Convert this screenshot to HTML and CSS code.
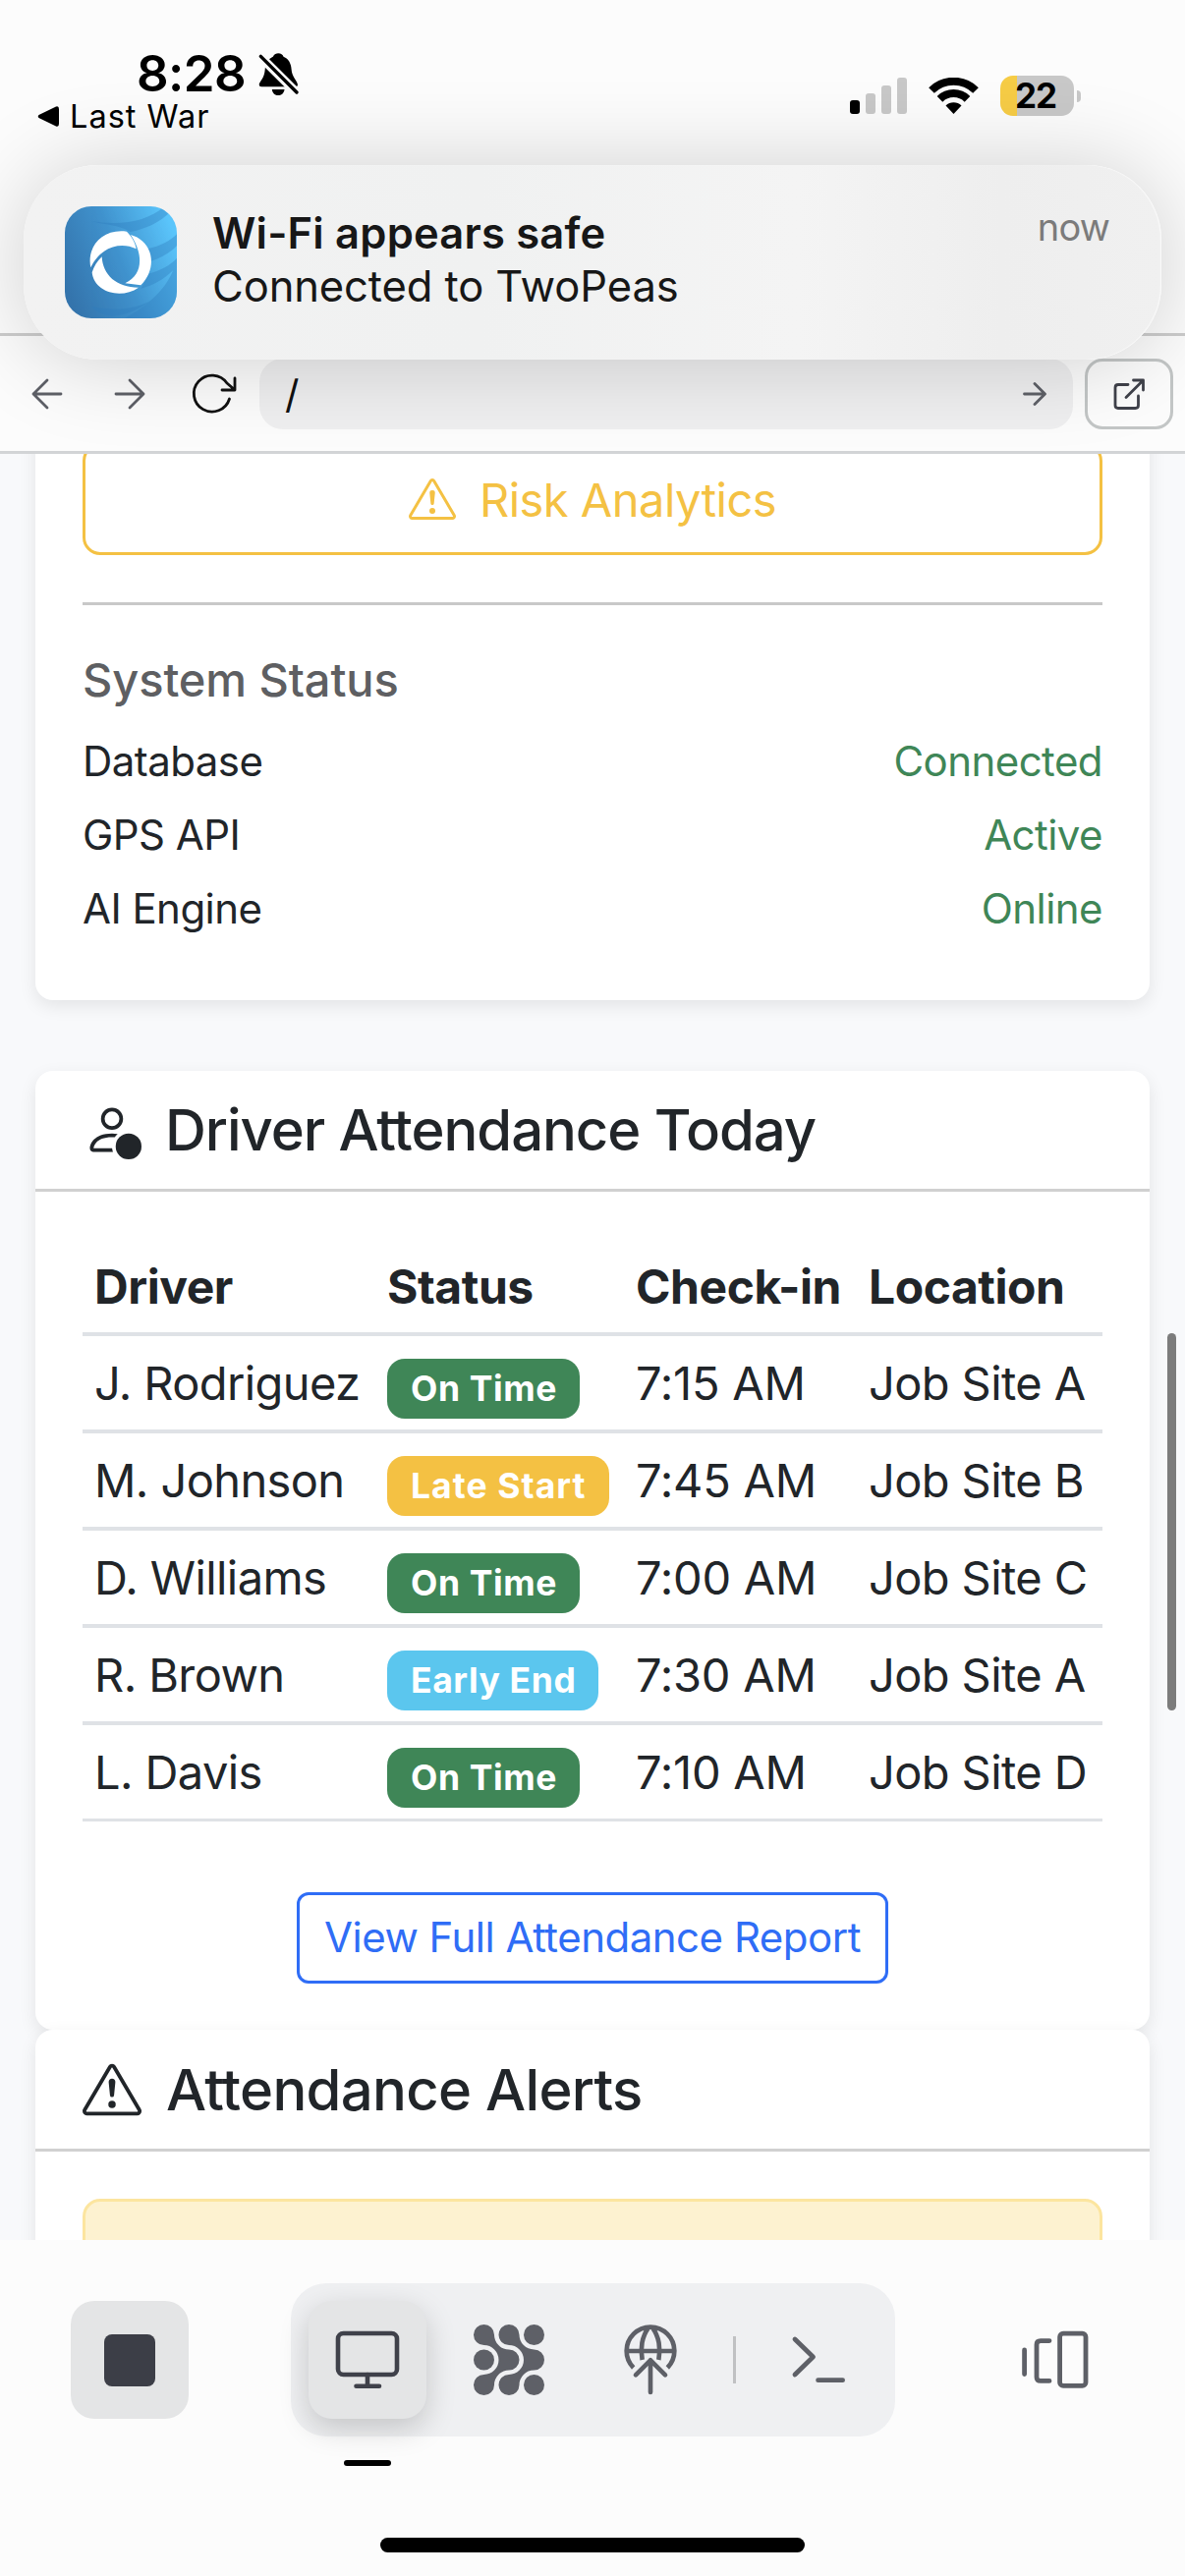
FILE: index.html
```html
<!DOCTYPE html>
<html lang="en">
<head>
<meta charset="utf-8">
<title>Driver Attendance</title>
<link rel="stylesheet" href="styles.css">
</head>
<body>
<div class="screen">
  <header class="status-bar">
    <div class="status-left">
      <div class="clock">8:28
        <svg class="bell" viewBox="36 24 122 134"><path d="M96 28C104 28 110 32 112 38C128 44 135 60 136 76C137 100 155 112 155 124Q155 129 148 129H45Q38 129 38 122C40 112 54 104 56 76C57 58 66 44 80 38C84 31 90 28 96 28ZM77 137H115C113 150 105 155 96 155C87 155 79 150 77 137Z"/><path d="M32 28L160 155" stroke="#fbfbfb" stroke-width="27"/><path d="M43 37L152 146" stroke="#000" stroke-width="10" stroke-linecap="round"/></svg>
      </div>
      <div class="back-app">
        <svg width="22" height="21" viewBox="0 0 22 21"><path d="M1.500 9Q0 10.500 1.500 12L19 20.500Q22 21.500 22 18V3Q22-.5 19 .5Z"/></svg>
        Last War
      </div>
    </div>
    <div class="status-right">
      <svg width="58" height="37" viewBox="0 0 58 37"><rect y="23" width="10" height="14" rx="3"/><g fill="#c8c8c8"><rect x="16" y="16" width="10" height="21" rx="3"/><rect x="32" y="8" width="10" height="29" rx="3"/><rect x="48" width="10" height="37" rx="3"/></g></svg>
      <svg width="51" height="37" viewBox="0 0 51 37"><g fill="none" stroke="#000" stroke-width="8"><path d="M3 13A32 32 0 0 1 48 13"/><path d="M11.500 21.800A20 20 0 0 1 39.500 21.800"/></g><path d="M25.500 37L17.500 28.500A11.500 11.500 0 0 1 33.500 28.500Z"/></svg>
      <div class="battery"><div class="battery-level">22</div><div class="battery-tip"></div></div>
    </div>
  </header>

  <nav class="toolbar">
    <svg class="nav-icon back" width="32" height="32" viewBox="0 0 32 32"><path d="M30 16H2M16 2L2 16L16 30"/></svg>
    <svg class="nav-icon forward" width="32" height="32" viewBox="0 0 32 32"><path d="M2 16H30M16 2L30 16L16 30"/></svg>
    <svg class="nav-icon reload" width="48" height="44" viewBox="194 379 48 44"><path d="M233.500 406A18.500 18.500 0 1 1 231 390L238.500 396.500M239 385V397H226"/></svg>
    <div class="url">/
      <svg class="nav-icon" width="24" height="24" viewBox="0 0 24 24"><path d="M1.500 12H22M12 1.500L22.500 12L12 22.500"/></svg>
    </div>
    <div class="open-button">
      <svg class="nav-icon" width="33" height="34" viewBox="1133 384 33 34"><path d="M1148 391.500H1138Q1135 391.500 1135 394.500V412.500Q1135 415.500 1138 415.500H1155.500Q1158.500 415.500 1158.500 412.500V403M1146 404.500L1163 387.500M1153.500 387H1163.500V397"/></svg>
    </div>
  </nav>

  <main class="page">
    <section class="card actions">
      <div class="btn btn-risk">
        <svg width="48" height="48" viewBox="0 0 16 16" fill="currentColor"><path d="M7.938 2.016A.13.13 0 0 1 8.002 2a.13.13 0 0 1 .063.016.15.15 0 0 1 .054.057l6.857 11.667c.036.06.035.124.002.183a.2.2 0 0 1-.054.06.1.1 0 0 1-.066.017H1.146a.1.1 0 0 1-.066-.017.2.2 0 0 1-.054-.06.18.18 0 0 1 .002-.183L7.884 2.073a.15.15 0 0 1 .054-.057m1.044-.45a1.13 1.13 0 0 0-1.960 0L.165 13.233c-.457.778.091 1.767.98 1.767h13.713c.889 0 1.438-.99.98-1.767z"/><path d="M7.002 12a1 1 0 1 1 2 0 1 1 0 0 1-2 0M7.100 5.995a.905.905 0 1 1 1.800 0l-.35 3.507a.552.552 0 0 1-1.100 0z"/></svg>
        Risk Analytics
      </div>
      <hr class="rule">
      <h6 class="status-title">System Status</h6>
      <div class="status-row"><span>Database</span><span class="ok">Connected</span></div>
      <div class="status-row"><span>GPS API</span><span class="ok">Active</span></div>
      <div class="status-row"><span>AI Engine</span><span class="ok">Online</span></div>
    </section>

    <section class="card attendance">
      <h5 class="card-header">
        <svg width="60" height="60" viewBox="0 0 16 16" fill="currentColor"><path d="M11 5a3 3 0 1 1-6 0 3 3 0 0 1 6 0M8 7a2 2 0 1 0 0-4 2 2 0 0 0 0 4m.256 7a4.500 4.500 0 0 1-.229-1.004H3c.001-.246.154-.986.832-1.664C4.484 10.680 5.711 10 8 10q.39 0 .74.025c.226-.341.496-.65.804-.918Q8.844 9.002 8 9c-5 0-6 3-6 4s1 1 1 1z"/><circle cx="12.500" cy="12.500" r="3.500"/></svg>
        Driver Attendance Today
      </h5>
      <div class="card-body">
        <table class="table">
          <thead><tr><th class="c1">Driver</th><th class="c2">Status</th><th class="c3">Check-in</th><th>Location</th></tr></thead>
          <tbody>
            <tr><td>J. Rodriguez</td><td><span class="badge green">On Time</span></td><td class="time">7:15 AM</td><td>Job Site A</td></tr>
            <tr><td>M. Johnson</td><td><span class="badge yellow">Late Start</span></td><td class="time">7:45 AM</td><td>Job Site B</td></tr>
            <tr><td>D. Williams</td><td><span class="badge green">On Time</span></td><td class="time">7:00 AM</td><td>Job Site C</td></tr>
            <tr><td>R. Brown</td><td><span class="badge blue">Early End</span></td><td class="time">7:30 AM</td><td>Job Site A</td></tr>
            <tr><td>L. Davis</td><td><span class="badge green">On Time</span></td><td class="time">7:10 AM</td><td>Job Site D</td></tr>
          </tbody>
        </table>
        <div class="btn btn-report">View Full Attendance Report</div>
      </div>
    </section>

    <section class="card alerts">
      <h5 class="card-header">
        <svg width="60" height="60" viewBox="0 0 16 16" fill="currentColor"><path d="M7.938 2.016A.13.13 0 0 1 8.002 2a.13.13 0 0 1 .063.016.15.15 0 0 1 .054.057l6.857 11.667c.036.06.035.124.002.183a.2.2 0 0 1-.054.06.1.1 0 0 1-.066.017H1.146a.1.1 0 0 1-.066-.017.2.2 0 0 1-.054-.06.18.18 0 0 1 .002-.183L7.884 2.073a.15.15 0 0 1 .054-.057m1.044-.45a1.13 1.13 0 0 0-1.960 0L.165 13.233c-.457.778.091 1.767.98 1.767h13.713c.889 0 1.438-.99.98-1.767z"/><path d="M7.002 12a1 1 0 1 1 2 0 1 1 0 0 1-2 0M7.100 5.995a.905.905 0 1 1 1.800 0l-.35 3.507a.552.552 0 0 1-1.100 0z"/></svg>
        Attendance Alerts
      </h5>
      <div class="card-body"><div class="alert"></div></div>
    </section>
    <div class="scroll-thumb"></div>
  </main>

  <footer class="dock">
    <div class="dock-row">
      <div class="slot filled"><svg viewBox="0 0 120 120"><rect x="34" y="34" width="52" height="53" rx="8" fill="#3c3e47"/></svg></div>
      <div class="dock-group">
        <div class="slot filled active"><svg viewBox="0 0 120 120" fill="none" stroke="#3f414a" stroke-width="4.600" stroke-linecap="round"><rect x="30" y="33" width="60" height="42" rx="5.500"/><path d="M60 75V86M48.500 86.700H72"/></svg><div class="marker"></div></div>
        <div class="slot"><svg viewBox="0 0 120 120" fill="#5e6067"><g transform="translate(12 8) scale(.33333)"><path d="M99 79.500A45 45 0 0 0 144 124.500A31.500 31.500 0 0 1 144 187.500A45 45 0 0 0 99 232.500A31.500 31.500 0 1 1 67.500 201A45 45 0 0 0 67.500 111A31.500 31.500 0 1 1 99 79.500Z"/><path transform="translate(76.500 0)" d="M99 79.500A45 45 0 0 0 144 124.500A31.500 31.500 0 0 1 144 187.500A45 45 0 0 0 99 232.500A31.500 31.500 0 1 1 67.500 201A45 45 0 0 0 67.500 111A31.500 31.500 0 1 1 99 79.500Z"/><circle cx="220.500" cy="79.500" r="31.500"/><circle cx="67.500" cy="156" r="31.500"/><circle cx="220.500" cy="232.500" r="31.500"/></g></svg></div>
        <div class="slot"><svg viewBox="0 0 120 120" fill="none" stroke="#5e6067" stroke-width="14"><g transform="translate(-132 8) scale(.33333)"><path d="M524 180A73 73 0 1 1 628 180M503 129H649M570 58C550 84 544 122 551 156M582 58C602 84 608 122 601 156"/><path stroke-linecap="round" stroke-linejoin="round" d="M576 157V255M531 202L576 157L621 202"/></g></svg></div>
        <div class="divider"></div>
        <div class="slot"><svg viewBox="0 0 120 120" fill="none" stroke="#5e6067" stroke-width="4.800" stroke-linecap="round" stroke-linejoin="round"><path d="M36 39L54.500 57L36 75M59.600 80.700H84.600"/></svg></div>
      </div>
      <div class="slot"><svg viewBox="0 0 120 120" fill="none" stroke="#5e6067" stroke-width="4.800" stroke-linecap="round"><path d="M28.600 50V74.500M54 40.600H45Q41 40.600 41 44.600V77.400Q41 81.400 45 81.400H54"/><rect x="64.600" y="33.200" width="26.400" height="53.200" rx="3.500"/></svg></div>
    </div>
    <div class="home-bar"></div>
  </footer>

  <aside class="notification">
    <svg class="app-icon" viewBox="18 30 342 342">
      <defs><linearGradient id="sky" x1="0" y1=".7" x2="1" y2=".3"><stop offset="0" stop-color="#3474ac"/><stop offset=".5" stop-color="#4092cd"/><stop offset="1" stop-color="#5bc5fb"/></linearGradient></defs>
      <path fill="url(#sky)" d="M18 30H360V372H18Z"/>
      <g fill="#2f7dbd" opacity=".38"><path d="M100 75C190 90 270 75 320 32L342 44C310 80 260 100 218 108C180 85 140 88 100 75Z"/><path d="M270 160C310 152 340 135 360 115V150C340 172 310 188 280 198Z"/><path d="M275 235C310 226 340 210 360 188V372H200C270 335 325 285 348 226C320 254 290 270 250 282Z"/><path d="M100 335C170 350 230 345 280 318C240 350 200 362 160 366C130 360 110 350 100 335Z"/></g>
      <g fill="#fff"><path d="M97 217C84 155 130 97 207 107C222 122 233 140 236 160C190 137 128 152 97 217Z"/><path d="M219 117C285 135 305 215 250 271L202 265C258 240 258 175 219 117Z"/><path d="M131 184C134 240 175 278 243 278C190 315 107 293 101 232C107 213 117 197 131 184Z"/></g>
    </svg>
    <div class="note-text"><div class="note-title">Wi-Fi appears safe</div><div class="note-sub">Connected to TwoPeas</div></div>
    <div class="note-time">now</div>
  </aside>
</div>
</body>
</html>
```
FILE: styles.css
```css
* { box-sizing: border-box; }
body { margin: 0; font-family: Inter, "Liberation Sans", sans-serif; color: #212529; background: #fcfcfc; }
svg { display: block; flex: none; }
.screen { position: relative; display: flex; flex-direction: column; width: 1206px; height: 2622px; overflow: hidden; }

.status-bar { display: flex; justify-content: space-between; align-items: flex-start; height: 342px; padding: 45px 106px 0 38px; border-bottom: 3px solid #ccc; color: #000; flex: none; }
.clock { display: flex; align-items: center; gap: 13px; margin-left: 101px; font-size: 51px; font-weight: 600; line-height: 60px; letter-spacing: -.6px; }
.bell { width: 41px; height: 45px; }
.back-app { display: flex; align-items: center; gap: 11px; font-size: 32.500px; line-height: 27px; letter-spacing: 1px; }
.status-right { display: flex; align-items: center; gap: 22px; padding-top: 32px; }
.battery { display: flex; align-items: center; gap: 3px; }
.battery-level { width: 75px; height: 41px; border-radius: 13px; background: linear-gradient(90deg, #f6cc46 17px, #c8c8c8 17px); padding-left: 15px; font-size: 35px; font-weight: 700; line-height: 41px; letter-spacing: -1px; }
.battery-tip { width: 4px; height: 12px; border-radius: 0 6px 6px 0; background: #c8c8c8; }

.toolbar { display: flex; align-items: center; height: 120px; padding: 1px 12px 0 32px; border-bottom: 3px solid #d2d4d6; flex: none; }
.nav-icon { fill: none; stroke: #5e6067; stroke-width: 2.800px; stroke-linecap: round; stroke-linejoin: round; }
.forward { margin-left: 52px; }
.reload { margin-left: 46px; stroke: #111; }
.url { display: flex; flex: 1; align-items: center; justify-content: space-between; height: 72px; margin: 0 12px 0 22px; padding: 0 27px 0 26px; border-radius: 24px; background: #efeff0; font-size: 40px; color: #111; }
.open-button { display: flex; align-items: center; justify-content: center; width: 90px; height: 72px; border: 3px solid #c3c6c6; border-radius: 18px; }
.open-button .nav-icon { stroke: #3f414a; }

.page { position: relative; height: 1818px; flex: none; padding: 0 36px; overflow: hidden; background: #f8f9fb; }
.card { border-radius: 18px; background: #fff; box-shadow: 0 6px 18px rgba(0, 0, 0, .085); }
.actions { margin-top: -60px; padding: 49px 48px 61px; }
.btn { display: flex; align-items: center; justify-content: center; border: 3px solid; }
.btn-risk { height: 114px; gap: 24px; border-radius: 18px; color: #f4c143; font-size: 47px; letter-spacing: -.5px; }
.rule { height: 3px; margin: 48px 0; border: 0; background: #c8c8c8; }
.status-title { margin: -1px 0 22px; font-size: 47px; font-weight: 500; line-height: 58px; letter-spacing: -.1px; color: #5e5f62; }
.status-row { display: flex; justify-content: space-between; margin-bottom: 12px; font-size: 42px; line-height: 63px; letter-spacing: -.55px; }
.status-row:last-child { margin-bottom: 1px; }
.ok { color: #3f8657; }

.attendance { margin-top: 72px; }
.card-header { display: flex; align-items: center; gap: 24px; height: 123px; margin: 0; padding: 0 48px; border-bottom: 3px solid #d0d0d0; font-size: 58px; font-weight: 500; letter-spacing: -1.050px; }
.alerts .card-header { height: 124px; gap: 25px; letter-spacing: -.7px; }
.card-body { padding: 48px 48px 47px; }
.table { width: 100%; table-layout: fixed; border-spacing: 0; font-size: 47px; letter-spacing: -.6px; white-space: nowrap; }
.table th, .table td { height: 99px; padding: 0 12px; border-bottom: 4px solid #dfe2e6; line-height: 72px; text-align: left; vertical-align: middle; }
.table th { padding-top: 3px; font-size: 48px; font-weight: 700; letter-spacing: -.45px; }
.table .time { letter-spacing: -.25px; }
.table tr:last-child td { height: 98px; border-bottom-width: 3px; }
.table thead tr th { height: 99px; border-bottom-width: 4px; }
.c1 { width: 298px; }
.c2 { width: 253px; }
.c3 { width: 237px; }
.badge { display: block; width: fit-content; height: 61px; margin-top: 12px; padding: 0 23px 0 24px; border-radius: 18px; color: #fff; font-size: 35.500px; font-weight: 700; line-height: 61px; letter-spacing: .6px; }
.green { background: #3f8657; }
.yellow { background: #f4c143; letter-spacing: 1.050px; }
.blue { background: #5bc6ee; }
.btn-report { width: 602px; height: 93px; margin: 72px auto 0; padding-bottom: 2px; border-radius: 12px; color: #2f6df6; font-size: 42px; letter-spacing: -.5px; white-space: nowrap; }
.alert { height: 200px; border: 3px solid #fce59f; border-radius: 18px; background: #fdf2d0; }
.scroll-thumb { position: absolute; top: 895px; right: 9px; width: 9px; height: 384px; border-radius: 5px; background: #7c7c7c; }

.dock { display: flex; flex-direction: column; height: 342px; flex: none; padding: 44px 72px 24px; background: #fcfcfc; }
.dock-row { display: flex; align-items: center; justify-content: space-between; height: 156px; }
.dock-group { display: flex; align-items: center; gap: 24px; height: 156px; padding: 0 18px; border-radius: 36px; background: #eff0f2; }
.slot { position: relative; width: 120px; height: 120px; border-radius: 24px; }
.filled { background: #e4e5e6; }
.active { box-shadow: 0 10px 30px rgba(0, 0, 0, .18); }
.marker { position: absolute; top: 162px; left: 36px; width: 48px; height: 6px; border-radius: 3px; background: #000; }
.divider { width: 3px; height: 48px; background: #c0c1c3; }
.home-bar { width: 432px; height: 15px; margin: auto auto 0; border-radius: 8px; background: #000; }

.notification { position: absolute; top: 168px; left: 24px; display: flex; width: 1158px; height: 198px; padding: 42px 53px 0 42px; border-radius: 76px; background: linear-gradient(90deg, #f2f2f2, #f0f1f1 40%, #f4f4f4 68%, #eee 86%, #f0f0f0); box-shadow: 0 2px 90px rgba(0, 0, 0, .18), inset -1px 0 1px #fafafa; }
.app-icon { width: 114px; height: 114px; border-radius: 27px; }
.note-text { flex: 1; margin-left: 36px; font-size: 43.500px; line-height: 54px; color: #171717; }
.note-title { font-weight: 600; letter-spacing: .2px; }
.note-sub { letter-spacing: -.1px; }
.note-time { font-size: 38px; line-height: 42px; letter-spacing: -.8px; color: #7b7b7b; }
```
